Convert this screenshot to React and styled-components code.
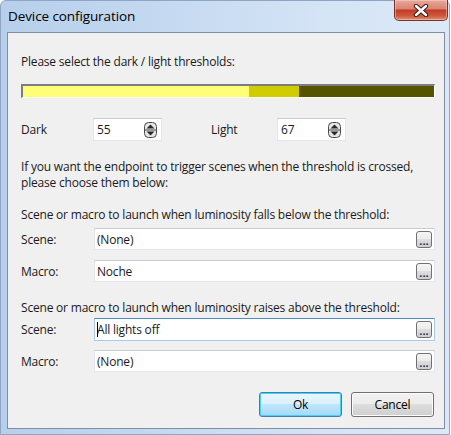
import React from "react";
import styled, { createGlobalStyle } from "styled-components";

const Global = createGlobalStyle`
  html, body { margin: 0; padding: 0; background: #ffffff; }
  body { font-family: "Open Sans", "Noto Sans", "Liberation Sans", sans-serif; }
`;

const Window = styled.div`
  width: 450px;
  height: 435px;
  box-sizing: border-box;
  display: flex;
  flex-direction: column;
  border: 1px solid #8ea6c4;
  border-radius: 6px 6px 0 0;
  background: linear-gradient(to right, #b7cfeb 0%, #c6daf1 40%, #d6e5f6 75%, #dbe8f7 100%);
`;

const TitleBar = styled.div`
  height: 31px;
  display: flex;
  justify-content: space-between;
  align-items: flex-start;
`;

const Title = styled.div`
  margin: 7px 0 0 7px;
  font-size: 13.5px;
  line-height: 17px;
  color: #000;
  letter-spacing: -0.1px;
`;

const CloseButton = styled.div`
  width: 54px;
  height: 21px;
  margin-right: 1px;
  margin-top: -1px;
  box-sizing: border-box;
  border: 1px solid #7b3226;
  border-top: none;
  border-radius: 0 0 5px 5px;
  background: linear-gradient(to bottom, #e9a99b 0%, #d9836f 45%, #c13a24 50%, #cd5b3e 80%, #e19078 100%);
  box-shadow: inset 0 0 0 1px rgba(255, 220, 210, 0.45);
  display: flex;
  align-items: center;
  justify-content: center;
`;

const Client = styled.div`
  flex: 1;
  margin: 0 4px 5px 6px;
  border: 1px solid #7f8ea3;
  background: #f0f0f0;
  padding: 21px 9px 11px 13px;
  display: flex;
  flex-direction: column;
  font-size: 12px;
  color: #1a1a1a;
  letter-spacing: -0.2px;
`;

const Text = styled.div`
  line-height: ${(p) => p.$lh || 14}px;
  margin-top: ${(p) => p.$mt || 0}px;
`;

const Bar = styled.div`
  margin-top: 15px;
  height: 14px;
  box-sizing: border-box;
  display: flex;
  border-top: 2px solid #7d7d7d;
  border-left: 2px solid #7d7d7d;
  border-bottom: 1px solid #ffffff;
  border-right: 1px solid #ffffff;
`;

const Segment = styled.div`
  background: ${(p) => p.$color};
  flex: ${(p) => p.$grow};
`;

const SpinRow = styled.div`
  margin-top: 20px;
  display: flex;
  align-items: center;
  height: 23px;
`;

const Label = styled.div`
  width: ${(p) => p.$w}px;
  flex-shrink: 0;
`;

const SpinBox = styled.div`
  width: 69px;
  height: 23px;
  box-sizing: border-box;
  background: #fff;
  border: 1px solid #e3e7ed;
  border-top-color: #c9ccd2;
  display: flex;
  align-items: center;
  justify-content: space-between;
  padding: 0 4px 0 3px;
  margin-right: ${(p) => p.$mr || 0}px;
`;

const Field = styled.div`
  margin-top: ${(p) => p.$mt}px;
  display: flex;
  align-items: center;
  height: ${(p) => p.$h || 22}px;
`;

const TextBox = styled.div`
  flex: 1;
  height: 100%;
  box-sizing: border-box;
  background: #fff;
  border: 1px solid ${(p) => (p.$focused ? "#a9cbe6" : "#e3e7ed")};
  border-top-color: ${(p) => (p.$focused ? "#4d8ec0" : "#c9ccd2")};
  display: flex;
  align-items: center;
  padding: 0 2px 0 2px;
`;

const Value = styled.div`
  flex: 1;
  display: flex;
  align-items: center;
`;

const Caret = styled.span`
  display: inline-block;
  width: 1px;
  height: 15px;
  background: #000;
  margin-right: -1px;
`;

const EllipsisButton = styled.div`
  width: 16px;
  height: 17px;
  box-sizing: border-box;
  border: 1px solid #707070;
  border-radius: 3px;
  background: linear-gradient(to bottom, #f4f4f4 0%, #ebebeb 50%, #dddddd 50%, #cfcfcf 100%);
  display: flex;
  align-items: flex-end;
  justify-content: center;
  font-size: 11px;
  line-height: 11px;
  color: #1c2c64;
  font-weight: bold;
  letter-spacing: 0;
  padding-bottom: 1px;
`;

const ButtonRow = styled.div`
  margin-top: 20px;
  display: flex;
  justify-content: flex-end;
  gap: 9px;
  padding-right: 1px;
`;

const Button = styled.div`
  width: 83px;
  height: 25px;
  box-sizing: border-box;
  border: 1px solid ${(p) => (p.$default ? "#3c7fb1" : "#707070")};
  border-radius: 3px;
  background: ${(p) =>
    p.$default
      ? "linear-gradient(to bottom, #eaf6fd 0%, #d9f0fc 50%, #bee6fd 50%, #a7d9f5 100%)"
      : "linear-gradient(to bottom, #f2f2f2 0%, #ebebeb 50%, #dddddd 50%, #cfcfcf 100%)"};
  box-shadow: ${(p) => (p.$default ? "inset 0 0 0 1px #48d0f7" : "inset 0 0 0 1px #fcfcfc")};
  display: flex;
  align-items: center;
  justify-content: center;
  color: #000;
`;

const SpinIcon = () => (
  <svg width="13" height="16" viewBox="0 0 13 16">
    <rect x="0.5" y="0.5" width="12" height="15" rx="4" fill="#e6e6e6" stroke="#4a4a4a" />
    <line x1="1" y1="8" x2="12" y2="8" stroke="#4a4a4a" strokeWidth="1" />
    <path d="M2.5 6.5 L6.5 2.5 L10.5 6.5 Z" fill="#2a2a2a" />
    <path d="M2.5 9.5 L6.5 13.5 L10.5 9.5 Z" fill="#2a2a2a" />
  </svg>
);

const CloseIcon = () => (
  <svg width="16" height="13" viewBox="0 0 16 13">
    <path d="M3 2 L13 11 M13 2 L3 11" stroke="#3b1d18" strokeWidth="4.4" strokeLinecap="round" />
    <path d="M3 2 L13 11 M13 2 L3 11" stroke="#ffffff" strokeWidth="2.4" strokeLinecap="round" />
  </svg>
);

const Row = ({ label, value, mt, focused, h }) => (
  <Field $mt={mt} $h={h}>
    <Label $w={73}>{label}</Label>
    <TextBox $focused={focused}>
      <Value>
        {focused && <Caret />}
        {value}
      </Value>
      <EllipsisButton>...</EllipsisButton>
    </TextBox>
  </Field>
);

export default function App() {
  return (
    <>
      <Global />
      <Window>
        <TitleBar>
          <Title>Device configuration</Title>
          <CloseButton>
            <CloseIcon />
          </CloseButton>
        </TitleBar>
        <Client>
          <Text $lh={15}>Please select the dark / light thresholds:</Text>
          <Bar>
            <Segment $color="#ffff77" $grow={226} />
            <Segment $color="#cfcc00" $grow={50} />
            <Segment $color="#555300" $grow={135} />
          </Bar>
          <SpinRow>
            <Label $w={72}>Dark</Label>
            <SpinBox $mr={49}>
              <span>55</span>
              <SpinIcon />
            </SpinBox>
            <Label $w={66}>Light</Label>
            <SpinBox>
              <span>67</span>
              <SpinIcon />
            </SpinBox>
          </SpinRow>
          <Text $mt={18} $lh={16}>
            If you want the endpoint to trigger scenes when the threshold is crossed,
          </Text>
          <Text $lh={16}>please choose them below:</Text>
          <Text $mt={17}>Scene or macro to launch when luminosity falls below the threshold:</Text>
          <Row label="Scene:" value="(None)" mt={6} />
          <Row label="Macro:" value="Noche" mt={10} />
          <Text $mt={19}>Scene or macro to launch when luminosity raises above the threshold:</Text>
          <Row label="Scene:" value="All lights off" mt={3} focused h={23} />
          <Row label="Macro:" value="(None)" mt={9} />
          <ButtonRow>
            <Button $default>Ok</Button>
            <Button>Cancel</Button>
          </ButtonRow>
        </Client>
      </Window>
    </>
  );
}
